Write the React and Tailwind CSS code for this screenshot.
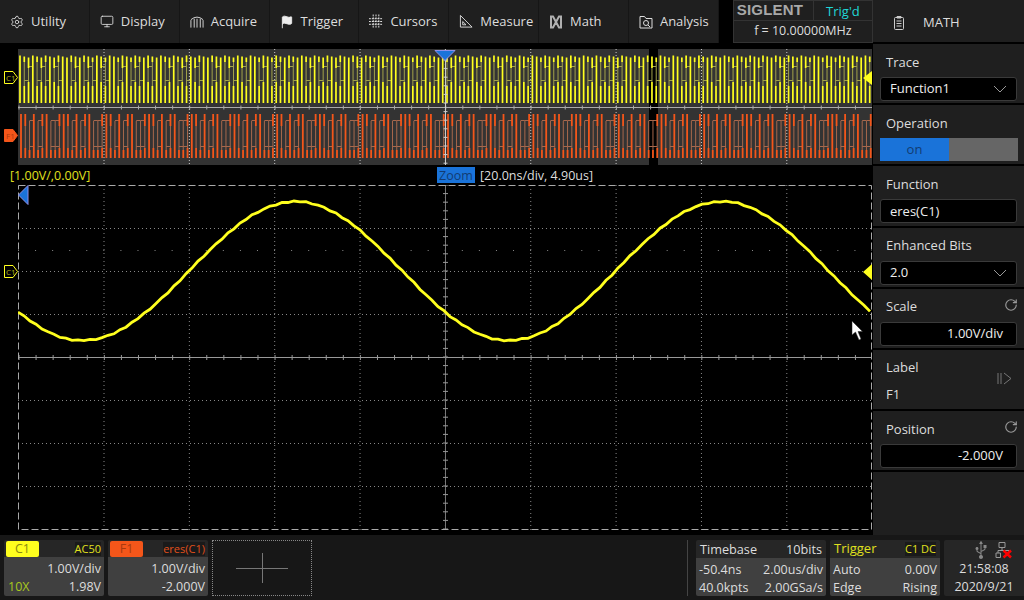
import { Settings, Monitor, Flag, RotateCw } from 'lucide-react';
import { FaUsb } from 'react-icons/fa';

const range = (n) => Array.from({ length: n }, (_, i) => i);

const AcquireIcon = () => (
  <svg width="15" height="14" viewBox="0 0 15 14" fill="none" stroke="#ddd" strokeWidth="1">
    <path d="M1 13V5M4.500 13V3.500M7.500 13V3.500M11 13V3.500M14 13V5M1 4.500Q7.500 -1 14 4.500" />
  </svg>
);
const CursorsIcon = () => (
  <svg width="15" height="15" viewBox="0 0 15 15" fill="none" stroke="#eee" strokeWidth="1" strokeDasharray="2 1">
    <path d="M4.500 0V15M7.500 0V15M10.500 0V15M0 4.500H15M0 7.500H15M0 10.500H15" />
  </svg>
);
const MeasureIcon = () => (
  <svg width="15" height="15" viewBox="0 0 15 15" fill="none" stroke="#ddd" strokeWidth="1">
    <path d="M1.500 1V13.500H14Z M4 7.500V11H7.500Z" />
  </svg>
);
const MathIcon = () => (
  <svg width="14" height="14" viewBox="0 0 14 14" fill="none" stroke="#b0b0b0" strokeWidth="2">
    <path d="M1 1.500H4L10 12.500H13M13 1.500H10L4 12.500H1M2 1.500V12.500M12 1.500V12.500" />
  </svg>
);
const AnalysisIcon = () => (
  <svg width="14" height="14" viewBox="0 0 14 14" fill="none" stroke="#ddd" strokeWidth="1">
    <path d="M1 13V1.500H5.500L7 3.500H13V13Z" />
    <circle cx="7" cy="8" r="2.500" />
    <path d="M9 10L11 12" />
  </svg>
);
const MathPanelIcon = () => (
  <svg width="12" height="14" viewBox="0 0 12 14" fill="none" stroke="#ccc" strokeWidth="1">
    <rect x="1.500" y="1.500" width="9" height="12" rx="1" />
    <path d="M4 0.500H8V2H4ZM3.500 5H8.500M3.500 7.500H8.500M3.500 10H8.500" />
  </svg>
);
const NetworkIcon = () => (
  <svg width="20" height="18" viewBox="0 0 20 18" fill="none">
    <path d="M4 1.500H10V6.500H4ZM1 12H5.500V16.500H1ZM7 6.500V9.500M3 12V9.500H14V12" stroke="#999" />
    <path d="M8.500 9.500L16 16.500M16 9.500L8.500 16.500" stroke="#f00" strokeWidth="2.500" />
  </svg>
);
const Chevron = () => (
  <svg width="14" height="8" viewBox="0 0 14 8" fill="none" stroke="#999">
    <path d="M1 1L7 7L13 1" />
  </svg>
);

const menu = [
  ['Utility', <Settings size={14} strokeWidth={1.5} className="text-[#ddd]" />],
  ['Display', <Monitor size={15} strokeWidth={1.5} className="text-[#ddd]" />],
  ['Acquire', <AcquireIcon />],
  ['Trigger', <Flag size={14} fill="#eee" strokeWidth={1.5} className="text-[#eee]" />],
  ['Cursors', <CursorsIcon />],
  ['Measure', <MeasureIcon />],
  ['Math', <MathIcon />],
  ['Analysis', <AnalysisIcon />],
];

// aliased pattern of the zoomed-out traces: stubs top and bottom, loops in between
const yellowKinds = [2, 0, 1, 2, 0, 1, 0, 2, 1, 0, 2];
const orangeKinds = [2, 1, 0, 2, 0, 1, 2, 0, 0, 1];

function yellowTrace() {
  const thick = [];
  const thin = [];
  range(200).forEach((i) => {
    const x = 20 + i * 4.27;
    const kind = yellowKinds[i % yellowKinds.length];
    const top = 55.500 + (i % 3);
    if (kind === 2) {
      thick.push(`M${x} ${top}V103`);
    } else if (kind === 1) {
      thick.push(`M${x} ${top}V68M${x} 82V103`);
      thin.push(`M${x} 68V82M${x} 66.500H${x + 4.27}`);
    } else {
      thick.push(`M${x} ${top}V62M${x} 86V103`);
      thin.push(`M${x} 62V86M${x} 80.500H${x + 4.27}`);
    }
  });
  return { thick: thick.join(''), thin: thin.join('') };
}

function orangeTrace() {
  const thick = [];
  const thin = [];
  range(200).forEach((i) => {
    const x = 21 + i * 4.27;
    const kind = orangeKinds[i % orangeKinds.length];
    if (kind === 2) {
      thick.push(`M${x} 114V158`);
    } else if (kind === 1) {
      thick.push(`M${x} 114V126M${x} 148V158`);
      thin.push(`M${x} 126V148`);
    } else {
      thick.push(`M${x} 150V158`);
      thin.push(`M${x} 121V150M${x} 120.500H${x + 4.27}M${x} 146.500H${x + 4.27}`);
    }
  });
  return { thick: thick.join(''), thin: thin.join('') };
}

const yTrace = yellowTrace();
const oTrace = orangeTrace();

// short straight pieces with a little jitter, like the sampled trace
const jitter = [0.6, -0.5, 0.2, -0.7, 0.5, 0, -0.3, 0.7, -0.4];
const sinePoints = range(143)
  .map((i) => {
    const x = 18 + i * 6;
    const y = 271 - 69.5 * Math.sin(((x - 189) * 2 * Math.PI) / 426.5) + jitter[i % jitter.length];
    return `${x},${y.toFixed(1)}`;
  })
  .join(' ');

const vDivs = range(9).map((i) => 104 + i * 85.35);
const ticks = (from, to, step) => {
  const out = [];
  for (let v = from; v <= to; v += step) out.push(v);
  return out;
};

function Overview() {
  return (
    <svg className="block w-[854px] h-[116px]" viewBox="18 49 854 116">
      <rect x="18" y="49" width="854" height="116" fill="#333" />
      <rect x="649" y="49" width="9" height="116" fill="#000" />
      <path d={yTrace.thin} fill="none" stroke="#a3a34a" strokeWidth="1" />
      <path d={yTrace.thick} fill="none" stroke="#ffff1e" strokeWidth="1.700" />
      <path d={oTrace.thin} fill="none" stroke="#a8684c" strokeWidth="1" />
      <path d={oTrace.thick} fill="none" stroke="#f4561a" strokeWidth="1.800" />
      {vDivs.map((x) => (
        <line key={x} x1={x} x2={x} y1="49" y2="165" stroke="#ccc" strokeDasharray="1 2" />
      ))}
      <line x1="18" x2="872" y1="107.500" y2="107.500" stroke="#aaa" />
      {ticks(19, 872, 17.07).map((x) => (
        <line key={x} x1={x} x2={x} y1="105.500" y2="109.500" stroke="#aaa" />
      ))}
      <line x1="445.500" x2="445.500" y1="60" y2="165" stroke="#ccc" />
      {ticks(60, 165, 8.6).map((y) => (
        <line key={y} x1="443.500" x2="447.500" y1={y} y2={y} stroke="#ccc" />
      ))}
      <path d="M435 50.500H455L445 60.500Z" fill="#1a73d9" stroke="#8f8fe8" />
    </svg>
  );
}

function Plot() {
  return (
    <svg className="block w-[854px] h-[345px]" viewBox="18 185 854 345">
      {vDivs.map((x) => (
        <line key={x} x1={x} x2={x} y1="185" y2="530" stroke="#888" strokeDasharray="1 3" />
      ))}
      {[228, 271, 314, 400, 443, 486].map((y) => (
        <line key={y} x1="18" x2="872" y1={y + 0.5} y2={y + 0.5} stroke="#888" strokeDasharray="1 3" />
      ))}
      <line x1="18" x2="872" y1="250.500" y2="250.500" stroke="#888" strokeDasharray="1 16.070" />
      <line x1="18" x2="872" y1="357.500" y2="357.500" stroke="#999" />
      {ticks(19, 872, 17.07).map((x) => (
        <line key={x} x1={x} x2={x} y1="355" y2="360" stroke="#999" />
      ))}
      <line x1="445.500" x2="445.500" y1="185" y2="530" stroke="#777" />
      {ticks(185, 530, 8.6).map((y) => (
        <line key={y} x1="443" x2="448" y1={y} y2={y} stroke="#999" />
      ))}
      <rect x="18.500" y="185.500" width="853" height="344" fill="none" stroke="#aaa" strokeDasharray="7 3" />
      <polyline points={sinePoints} fill="none" stroke="#ffff1e" strokeWidth="2.800" />
    </svg>
  );
}

function ChannelTag({ label, color, top }) {
  const solid = color === 'orange';
  return (
    <div className={`absolute left-[4px] ${top} w-[14px] h-[13px]`}>
      <svg className="absolute inset-0" width="14" height="13" viewBox="0 0 14 13">
        <path
          d="M0.500 0.500H9L13.500 6.500L9 12.500H0.500Z"
          fill={solid ? '#f4561a' : '#000'}
          stroke={solid ? '#f4561a' : '#ffff1e'}
        />
      </svg>
      <span className={`absolute left-[2px] top-0 text-[8px] leading-[13px] ${solid ? 'text-[#a83a10]' : 'text-[#b3b31a]'}`}>
        {label}
      </span>
    </div>
  );
}

const Section = ({ children }) => (
  <div className="h-[61.200px] relative border-b-2 border-black box-border">{children}</div>
);
const SectionLabel = ({ children }) => (
  <div className="pl-[13px] pt-[8.500px] text-[13px] leading-[18px] text-[#ddd]">{children}</div>
);
const Field = ({ children, right, chevron }) => (
  <div
    className={`mt-[6.500px] ml-[7px] w-[137px] h-[24px] bg-black rounded-[3px] border border-[#3a3a3a] flex items-center justify-between text-[13px] text-[#eee] ${
      right ? 'pr-[13px]' : 'pl-[9px] pr-[9px]'
    }`}
  >
    {right ? <span className="ml-auto">{children}</span> : <span>{children}</span>}
    {chevron && <Chevron />}
  </div>
);
const Knob = () => (
  <RotateCw size={14} strokeWidth={2} className="absolute right-[6px] top-[9px] text-[#999]" />
);

function ChannelCard({ name, badge, badgeText, coupling, couplingColor, lines }) {
  return (
    <div className="w-[100px] h-[56px] rounded-[2px] overflow-hidden flex flex-col">
      <div className="h-[18px] bg-[#262626] flex items-center justify-between pl-[2px] pr-[3px]">
        <span className={`w-[33px] h-[16px] rounded-[2px] text-center text-[12.500px] leading-[16px] ${badge} ${badgeText}`}>{name}</span>
        <span className={`bg-[#1a1a1a] text-[11px] leading-[14px] ${couplingColor}`}>{coupling}</span>
      </div>
      <div className="flex-1 bg-[#404040] text-[#ddd] text-[12.500px] pt-[3px] pl-[4px] pr-[3px] flex flex-col items-end leading-[18px]">
        {lines}
      </div>
    </div>
  );
}

export default function App() {
  return (
    <div className="relative w-[1024px] h-[600px] bg-black overflow-hidden flex flex-col font-['Open_Sans',sans-serif] text-[12.500px]">
      <div className="flex h-[535px]">
        {/* scope side */}
        <div className="relative w-[873px]">
          <div className="h-[43px] flex bg-[#1f1f1f]">
            {menu.map(([name, icon]) => (
              <div key={name} className="w-[89.850px] border-r border-[#161616] flex items-center gap-[7px] pl-[10px] text-[13px] text-[#ddd]">
                <span className="w-[14px] flex justify-center">{icon}</span>
                {name}
              </div>
            ))}
            <div className="w-[14px] bg-black" />
            <div className="flex-1 flex flex-col text-[#ddd] border border-[#333]">
              <div className="h-[20px] flex border-b border-[#333]">
                <div className="w-[80px] pl-[3px] text-left text-[15px] leading-[18px] font-bold tracking-[0.2px] text-[#a8a8a8] font-['Liberation_Sans',sans-serif] border-r border-[#333]">
                  SIGLENT
                </div>
                <div className="flex-1 text-center text-[13px] leading-[20px] text-[#1fd6d6]">Trig'd</div>
              </div>
              <div className="flex-1 text-center text-[12.500px] leading-[20px]">f = 10.00000MHz</div>
            </div>
          </div>
          <div className="mt-[6px] ml-[18px]">
            <Overview />
          </div>
          <div className="relative h-[20px] text-[12.500px] leading-[22px]">
            <span className="absolute left-[10px] top-0 text-[#e0e01e]">[1.00V/,0.00V]</span>
            <span className="absolute left-[437px] top-[2px] w-[38px] h-[16px] leading-[18px] text-center bg-[#1a73d9] text-[#123c73]">Zoom</span>
            <span className="absolute left-[480px] top-0 text-[#ddd]">[20.0ns/div, 4.90us]</span>
          </div>
          <div className="ml-[18px]">
            <Plot />
          </div>

          {/* markers over the traces */}
          <ChannelTag label="C1" color="yellow" top="top-[71px]" />
          <ChannelTag label="F1" color="orange" top="top-[129px]" />
          <ChannelTag label="C1" color="yellow" top="top-[265px]" />
          <svg className="absolute left-[863px] top-[71px]" width="10" height="14" viewBox="0 0 10 14">
            <path d="M0 7L9 0V14Z" fill="#ffff1e" />
          </svg>
          <svg className="absolute left-[863px] top-[264px]" width="10" height="16" viewBox="0 0 10 16">
            <path d="M0 8L9 0V16Z" fill="#ffff1e" />
          </svg>
          <svg className="absolute left-[18px] top-[185px]" width="11" height="20" viewBox="0 0 11 20">
            <path d="M0.500 10L10 0.500V19.500Z" fill="#1a73d9" stroke="#8f8fe8" />
          </svg>
          <svg className="absolute left-[851px] top-[320px]" width="13" height="21" viewBox="0 0 13 21">
            <path d="M1 1V15L4.500 12L8 20L10 19L7 11.500H11.500Z" fill="#fff" stroke="#222" strokeWidth="0.500" />
          </svg>
        </div>

        {/* right menu */}
        <div className="w-[151px] bg-[#1f1f1f] flex flex-col">
          <div className="h-[44px] border-b-2 border-black flex items-center pl-[20px] pt-[3px] gap-[18px] text-[13px] text-[#ddd]">
            <MathPanelIcon />
            MATH
          </div>
          <Section>
            <SectionLabel>Trace</SectionLabel>
            <Field chevron>Function1</Field>
          </Section>
          <Section>
            <SectionLabel>Operation</SectionLabel>
            <div className="mt-[6.500px] ml-[7px] w-[138px] h-[23px] flex text-[13px] leading-[23px]">
              <div className="w-[69px] bg-[#1a73d9] text-center text-[#123c73]">on</div>
              <div className="flex-1 bg-[#666]" />
            </div>
          </Section>
          <Section>
            <SectionLabel>Function</SectionLabel>
            <Field>eres(C1)</Field>
          </Section>
          <Section>
            <SectionLabel>Enhanced Bits</SectionLabel>
            <Field chevron>2.0</Field>
          </Section>
          <Section>
            <SectionLabel>Scale</SectionLabel>
            <Knob />
            <Field right>1.00V/div</Field>
          </Section>
          <Section>
            <SectionLabel>Label</SectionLabel>
            <div className="pl-[13px] mt-[9px] text-[13px] leading-[18px] text-[#ddd]">F1</div>
            <svg className="absolute right-[12px] top-[22px]" width="15" height="13" viewBox="0 0 15 13" fill="none" stroke="#777">
              <path d="M1 1V12M4 1V12M7 1L14 6.500L7 12" />
            </svg>
          </Section>
          <Section>
            <SectionLabel>Position</SectionLabel>
            <Knob />
            <Field right>-2.000V</Field>
          </Section>
          <div className="flex-1" />
        </div>
      </div>

      {/* status bar */}
      <div className="flex-1 bg-[#171717] relative flex pt-[5px] pl-[4px] gap-[4px]">
        <ChannelCard
          name="C1"
          badge="bg-[#ffff1e]"
          badgeText="text-[#8a8a10]"
          coupling="AC50"
          couplingColor="text-[#e0e01e]"
          lines={
            <>
              <div>1.00V/div</div>
              <div className="w-full flex justify-between">
                <span className="text-[#a8c81e]">10X</span>
                <span>1.98V</span>
              </div>
            </>
          }
        />
        <ChannelCard
          name="F1"
          badge="bg-[#f4561a]"
          badgeText="text-[#a83a10]"
          coupling="eres(C1)"
          couplingColor="text-[#e0501a]"
          lines={
            <>
              <div>1.00V/div</div>
              <div>-2.000V</div>
            </>
          }
        />
        <div className="w-[100px] h-[56px] relative border border-dotted border-[#888]">
          <svg className="absolute left-[23px] top-[12px]" width="52" height="30" viewBox="0 0 52 30" stroke="#777">
            <path d="M0 15.500H52M26.500 0V30" />
          </svg>
        </div>

        <div className="ml-auto flex gap-[4px]">
          <div className="w-px h-[56px] bg-[#444] mr-[4px]" />
          <div className="w-[130px] h-[56px] flex flex-col rounded-[2px] overflow-hidden">
            <div className="h-[18px] bg-[#262626] flex justify-between px-[4px] text-[#ddd] text-[12.700px] leading-[18px]">
              <span>Timebase</span>
              <span>10bits</span>
            </div>
            <div className="flex-1 bg-[#404040] text-[#ddd] px-[3px] pt-[3px] leading-[18px]">
              <div className="flex justify-between">
                <span>-50.4ns</span>
                <span>2.00us/div</span>
              </div>
              <div className="flex justify-between">
                <span>40.0kpts</span>
                <span>2.00GSa/s</span>
              </div>
            </div>
          </div>
          <div className="w-[110px] h-[56px] flex flex-col rounded-[2px] overflow-hidden">
            <div className="h-[18px] bg-[#262626] flex justify-between items-center px-[4px] text-[#e0e01e]">
              <span className="text-[13px]">Trigger</span>
              <span className="text-[11px] bg-[#1a1a1a] leading-[14px]">C1 DC</span>
            </div>
            <div className="flex-1 bg-[#404040] text-[#ddd] px-[3px] pt-[3px] leading-[18px]">
              <div className="flex justify-between">
                <span>Auto</span>
                <span>0.00V</span>
              </div>
              <div className="flex justify-between">
                <span>Edge</span>
                <span>Rising</span>
              </div>
            </div>
          </div>
          <div className="w-[80px] h-[56px] bg-[#262626] rounded-l-[2px] flex flex-col items-center text-[#ddd] leading-[18px]">
            <div className="h-[21px] w-full flex justify-end items-center gap-[5px] pr-[9px]">
              <FaUsb size={18} className="text-[#888] rotate-[-90deg]" />
              <NetworkIcon />
            </div>
            <div>21:58:08</div>
            <div>2020/9/21</div>
          </div>
        </div>
      </div>
    </div>
  );
}
